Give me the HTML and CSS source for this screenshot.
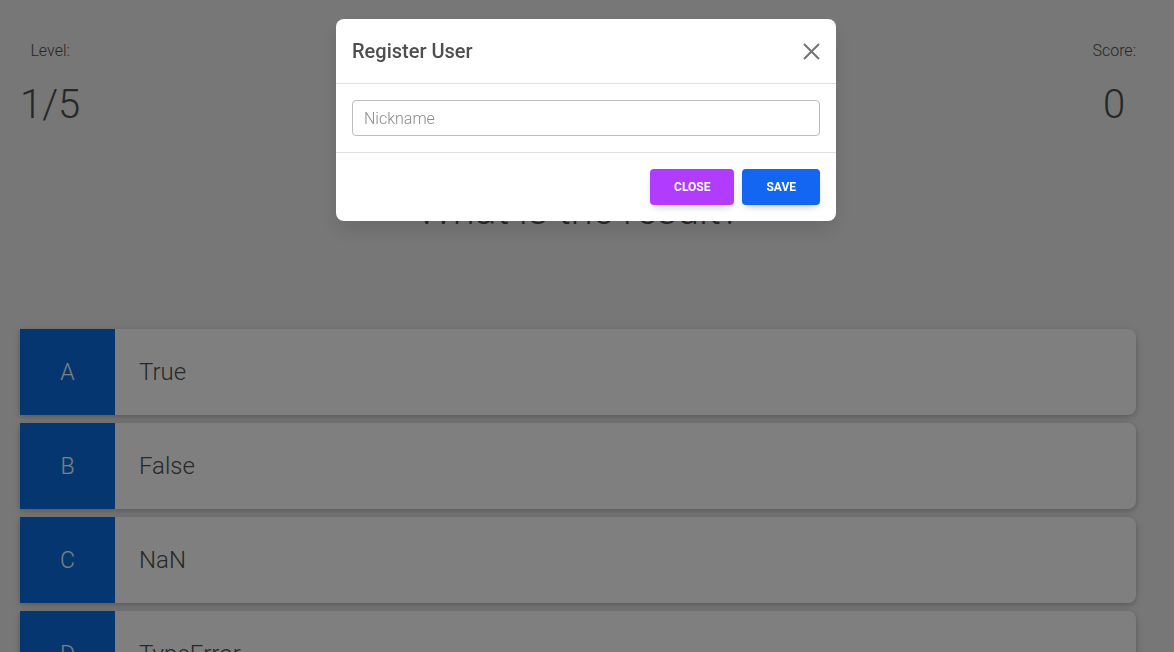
FILE: index.html
```html
<!DOCTYPE html>
<html lang="en">
<head>
<meta charset="utf-8">
<title>Quiz</title>
<link rel="stylesheet" href="styles.css">
</head>
<body>
<main class="page">
  <section class="stats">
    <div class="stat">
      <div class="stat-label">Level:</div>
      <div class="stat-value">1/5</div>
    </div>
    <div class="stat">
      <div class="stat-label">Score:</div>
      <div class="stat-value">0</div>
    </div>
  </section>
  <h1 class="question">What is the result?</h1>
  <section class="answers">
    <div class="answer"><div class="answer-letter">A</div><div class="answer-text">True</div></div>
    <div class="answer"><div class="answer-letter">B</div><div class="answer-text">False</div></div>
    <div class="answer"><div class="answer-letter">C</div><div class="answer-text">NaN</div></div>
    <div class="answer"><div class="answer-letter">D</div><div class="answer-text">TypeError</div></div>
  </section>
</main>

<div class="backdrop">
  <div class="modal">
    <div class="modal-header">
      <h5 class="modal-title">Register User</h5>
      <button class="btn-close" aria-label="Close">
        <svg width="17" height="17" viewBox="0 0 17 17"><path d="M1 1L16 16M16 1L1 16" stroke="#000" stroke-width="2" fill="none"/></svg>
      </button>
    </div>
    <div class="modal-body">
      <input class="form-input" type="text" placeholder="Nickname">
    </div>
    <div class="modal-footer">
      <button class="btn btn-secondary">Close</button>
      <button class="btn btn-primary">Save</button>
    </div>
  </div>
</div>
</body>
</html>
```
FILE: styles.css
```css
* { box-sizing: border-box; }
html, body { margin: 0; height: 100%; }
body {
  background: #eeeeee;
  font-family: Roboto, "Liberation Sans", sans-serif;
  color: #4f4f4f;
  overflow: hidden;
}
.page {
  padding: 0 38px 0 20px;
}
.stats {
  display: flex;
  justify-content: space-between;
  padding-top: 41px;
}
.stat {
  display: flex;
  flex-direction: column;
  align-items: center;
}
.stat-label {
  font-size: 16px;
  line-height: 20px;
  font-weight: 300;
}
.stat-value {
  margin-top: 20px;
  font-size: 40px;
  line-height: 48px;
  font-weight: 300;
}
.question {
  margin: 58px 0 0;
  text-align: center;
  font-size: 40px;
  line-height: 48px;
  font-weight: 300;
  color: #4f4f4f;
}
.answers {
  margin-top: 94px;
  display: flex;
  flex-direction: column;
  gap: 8px;
}
.answer {
  display: flex;
  height: 86px;
  background: #ffffff;
  border-radius: 0 8px 8px 0;
  box-shadow: 0 2px 5px rgba(0,0,0,0.16), 0 2px 10px rgba(0,0,0,0.10);
}
.answer-letter {
  width: 95px;
  flex: none;
  background: #0c6cde;
  color: #ffffff;
  display: flex;
  align-items: center;
  justify-content: center;
  font-size: 23px;
  font-weight: 300;
}
.answer-text {
  display: flex;
  align-items: center;
  padding-left: 24px;
  font-size: 24px;
  font-weight: 300;
  color: #4f4f4f;
}

/* modal */
.backdrop {
  position: fixed;
  inset: 0;
  background: rgba(0,0,0,0.5);
}
.modal {
  position: absolute;
  top: 19px;
  left: 336px;
  width: 500px;
  background: #ffffff;
  border-radius: 8px;
  box-shadow: 0 10px 20px rgba(0,0,0,0.1);
}
.modal-header {
  display: flex;
  align-items: center;
  justify-content: space-between;
  padding: 16px;
  border-bottom: 1px solid #e0e0e0;
}
.modal-title {
  margin: 0;
  font-size: 20px;
  line-height: 32px;
  font-weight: 500;
  color: #4f4f4f;
}
.btn-close {
  width: 17px;
  height: 17px;
  padding: 0;
  border: 0;
  background: transparent;
  opacity: 0.55;
  display: flex;
}
.modal-body {
  padding: 16px;
  border-bottom: 1px solid #e0e0e0;
}
.form-input {
  display: block;
  width: 100%;
  height: 36px;
  border: 1px solid #bdbdbd;
  border-radius: 4px;
  padding: 0 11px;
  font-family: Roboto, "Liberation Sans", sans-serif;
  font-size: 16px;
  font-weight: 300;
  color: #4f4f4f;
  outline: none;
}
.form-input::placeholder {
  color: #8a8a8a;
  font-weight: 300;
}
.modal-footer {
  display: flex;
  justify-content: flex-end;
  gap: 8px;
  padding: 16px;
}
.btn {
  height: 36px;
  padding: 0 24px;
  border: 0;
  border-radius: 4px;
  font-family: Roboto, "Liberation Sans", sans-serif;
  font-size: 12px;
  font-weight: 700;
  text-transform: uppercase;
  color: #ffffff;
  box-shadow: 0 4px 9px -4px rgba(0,0,0,0.35);
}
.btn-secondary { background: #b23cfd; }
.btn-primary { background: #1266f1; }
```
